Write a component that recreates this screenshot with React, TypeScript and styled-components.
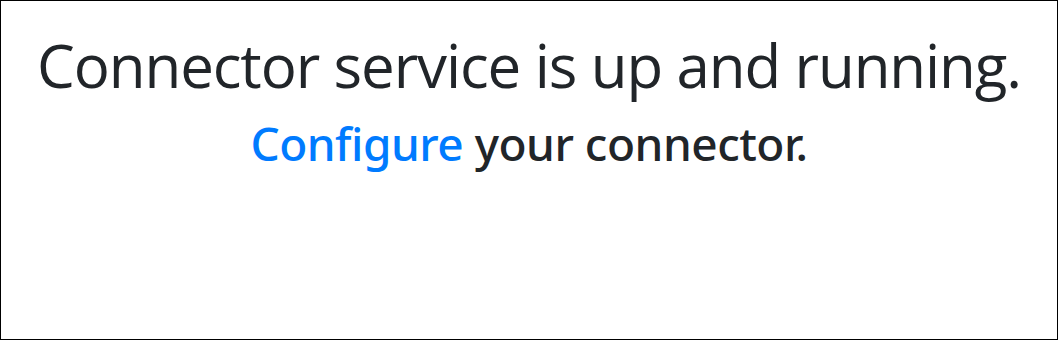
import React from "react";
import styled, { createGlobalStyle } from "styled-components";

const Global = createGlobalStyle`
  html, body { margin: 0; padding: 0; background: #fff; }
  * { box-sizing: border-box; }
`;

const Frame = styled.div`
  width: 1058px;
  height: 340px;
  border: 1px solid #000;
  display: flex;
  flex-direction: column;
  align-items: center;
  padding-top: 28px;
  font-family: "Open Sans", "Noto Sans", sans-serif;
  color: #212529;
`;

const Title = styled.h1`
  margin: 0;
  font-size: 60px;
  font-weight: 400;
  line-height: 1.2;
  letter-spacing: -1.1px;
  white-space: nowrap;
`;

const Lead = styled.p`
  margin: 15px 0 0;
  font-family: "Noto Sans", "Open Sans", sans-serif;
  font-size: 46px;
  font-weight: 500;
  line-height: 1.2;
  letter-spacing: -0.5px;
  white-space: nowrap;
`;

const Link = styled.a`
  color: #007bff;
  text-decoration: none;
`;

export default function App() {
  return (
    <>
      <Global />
      <Frame>
        <Title>Connector service is up and running.</Title>
        <Lead>
          <Link href="#">Configure</Link> your connector.
        </Lead>
      </Frame>
    </>
  );
}
